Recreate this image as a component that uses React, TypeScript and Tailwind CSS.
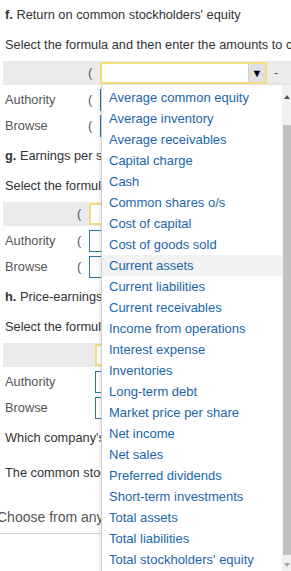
const opcoes = [
  "Average common equity",
  "Average inventory",
  "Average receivables",
  "Capital charge",
  "Cash",
  "Common shares o/s",
  "Cost of capital",
  "Cost of goods sold",
  "Current assets",
  "Current liabilities",
  "Current receivables",
  "Income from operations",
  "Interest expense",
  "Inventories",
  "Long-term debt",
  "Market price per share",
  "Net income",
  "Net sales",
  "Preferred dividends",
  "Short-term investments",
  "Total assets",
  "Total liabilities",
  "Total stockholders' equity",
]

function Linhas({ rotulo, paren }: { rotulo: number; paren: boolean }) {
  return (
    <>
      {["Authority", "Browse"].map((r, i) => (
        <div key={r} className={`${i === 0 ? "mt-[2px]" : "mt-[1px]"} ml-[5px] h-[25px] flex items-center`}>
          <span className="text-[12.8px] text-[#555]" style={{ width: rotulo - 5 }}>{r}</span>
          <span className="w-[12px] text-[12.8px] text-[#555]">{paren ? "(" : ""}</span>
          <div className="w-[160px] h-[22px] border border-[#2b7898] bg-white" />
        </div>
      ))}
    </>
  )
}

function Secao({ letra, titulo, rotulo, paren }: { letra: string; titulo: string; rotulo: number; paren: boolean }) {
  return (
    <div>
      <p className="ml-[5px] mt-[10px] h-[16px] leading-[16px] text-[12.8px] text-[#333] whitespace-nowrap">
        <b>{letra}</b> {titulo}
      </p>
      <p className="ml-[5px] mt-[14px] h-[16px] leading-[16px] text-[12.8px] text-[#333] whitespace-nowrap">
        Select the formula and then enter the amounts to calculate
      </p>
      <div className="mt-[8px] ml-[3px] h-[24px] bg-[#ebebeb] flex items-center">
        <div style={{ width: rotulo - 3 }} />
        <span className="w-[12px] text-[12.8px] text-[#555]">{paren ? "(" : ""}</span>
        <div className="w-[167px] h-[22px] border-2 border-[#f4de7c] bg-white" />
      </div>
      <Linhas rotulo={rotulo} paren={paren} />
    </div>
  )
}

export default function App() {
  return (
    <div className="relative w-[291px] h-[571px] overflow-hidden bg-white font-['Liberation_Sans',Arial,sans-serif]">
      <div className="-mt-[3px]">
        <p className="ml-[5px] mt-[10px] h-[16px] leading-[16px] text-[12.8px] text-[#333] whitespace-nowrap">
          <b>f.</b> Return on common stockholders' equity
        </p>
        <p className="ml-[5px] mt-[14px] h-[16px] leading-[16px] text-[12.8px] text-[#333] whitespace-nowrap">
          Select the formula and then enter the amounts to calculate
        </p>
        <div className="mt-[8px] ml-[3px] h-[24px] bg-[#ebebeb] flex items-center">
          <div className="w-[85px]" />
          <span className="w-[12px] text-[12.8px] text-[#555]">(</span>
          <div className="w-[167px] h-[22px] border-2 border-[#f4de7c] bg-white flex justify-end">
            <div className="w-[17px] h-full bg-[#e1e1e1] border-l border-[#cfcfcf] flex items-center justify-center text-[11px] text-black">▼</div>
          </div>
          <span className="ml-[7px] text-[12.8px] text-[#555]">-</span>
        </div>
        <Linhas rotulo={88} paren={true} />
      </div>

      <Secao letra="g." titulo="Earnings per share" rotulo={77} paren={true} />
      <Secao letra="h." titulo="Price-earnings ratio" rotulo={83} paren={false} />

      <p className="ml-[5px] mt-[10px] h-[16px] leading-[16px] text-[12.8px] text-[#333] whitespace-nowrap">
        Which company's stock is more attractive?
      </p>
      <p className="ml-[5px] mt-[19px] h-[16px] leading-[16px] text-[12.8px] text-[#333] whitespace-nowrap">
        The common stock of the company
      </p>
      <p className="-ml-[3px] mt-[28px] h-[16px] leading-[16px] text-[14px] text-[#555] whitespace-nowrap">
        Choose from any list or enter any number in the inputs
      </p>
      <div className="mt-[8px] border-t border-[#d0d0d0]" />

      <div className="absolute left-[101px] top-[85px] w-[190px] h-[486px] bg-white border-l border-[#cfcfcf] shadow-[0_2px_6px_rgba(0,0,0,0.15)]">
        <ul className="pt-[2px] pr-[9px]">
          {opcoes.map(o => (
            <li
              key={o}
              className={`h-[21px] leading-[21px] pl-[7px] text-[13px] text-[#2166a8] whitespace-nowrap ${o === "Current assets" ? "bg-[#f2f2f2]" : ""}`}
            >
              {o}
            </li>
          ))}
        </ul>
        <div className="absolute right-0 top-0 w-[9px] h-full bg-[#f1f1f1]">
          <div className="absolute left-[2px] top-[10px] w-0 h-0 border-l-[3px] border-r-[3px] border-b-[4px] border-l-transparent border-r-transparent border-b-[#555]" />
          <div className="absolute left-[1px] right-0 top-[40px] bottom-[16px] bg-[#c1c1c1]" />
          <div className="absolute left-[2px] bottom-[4px] w-0 h-0 border-l-[3px] border-r-[3px] border-t-[4px] border-l-transparent border-r-transparent border-t-[#a3a3a3]" />
        </div>
      </div>
    </div>
  )
}
